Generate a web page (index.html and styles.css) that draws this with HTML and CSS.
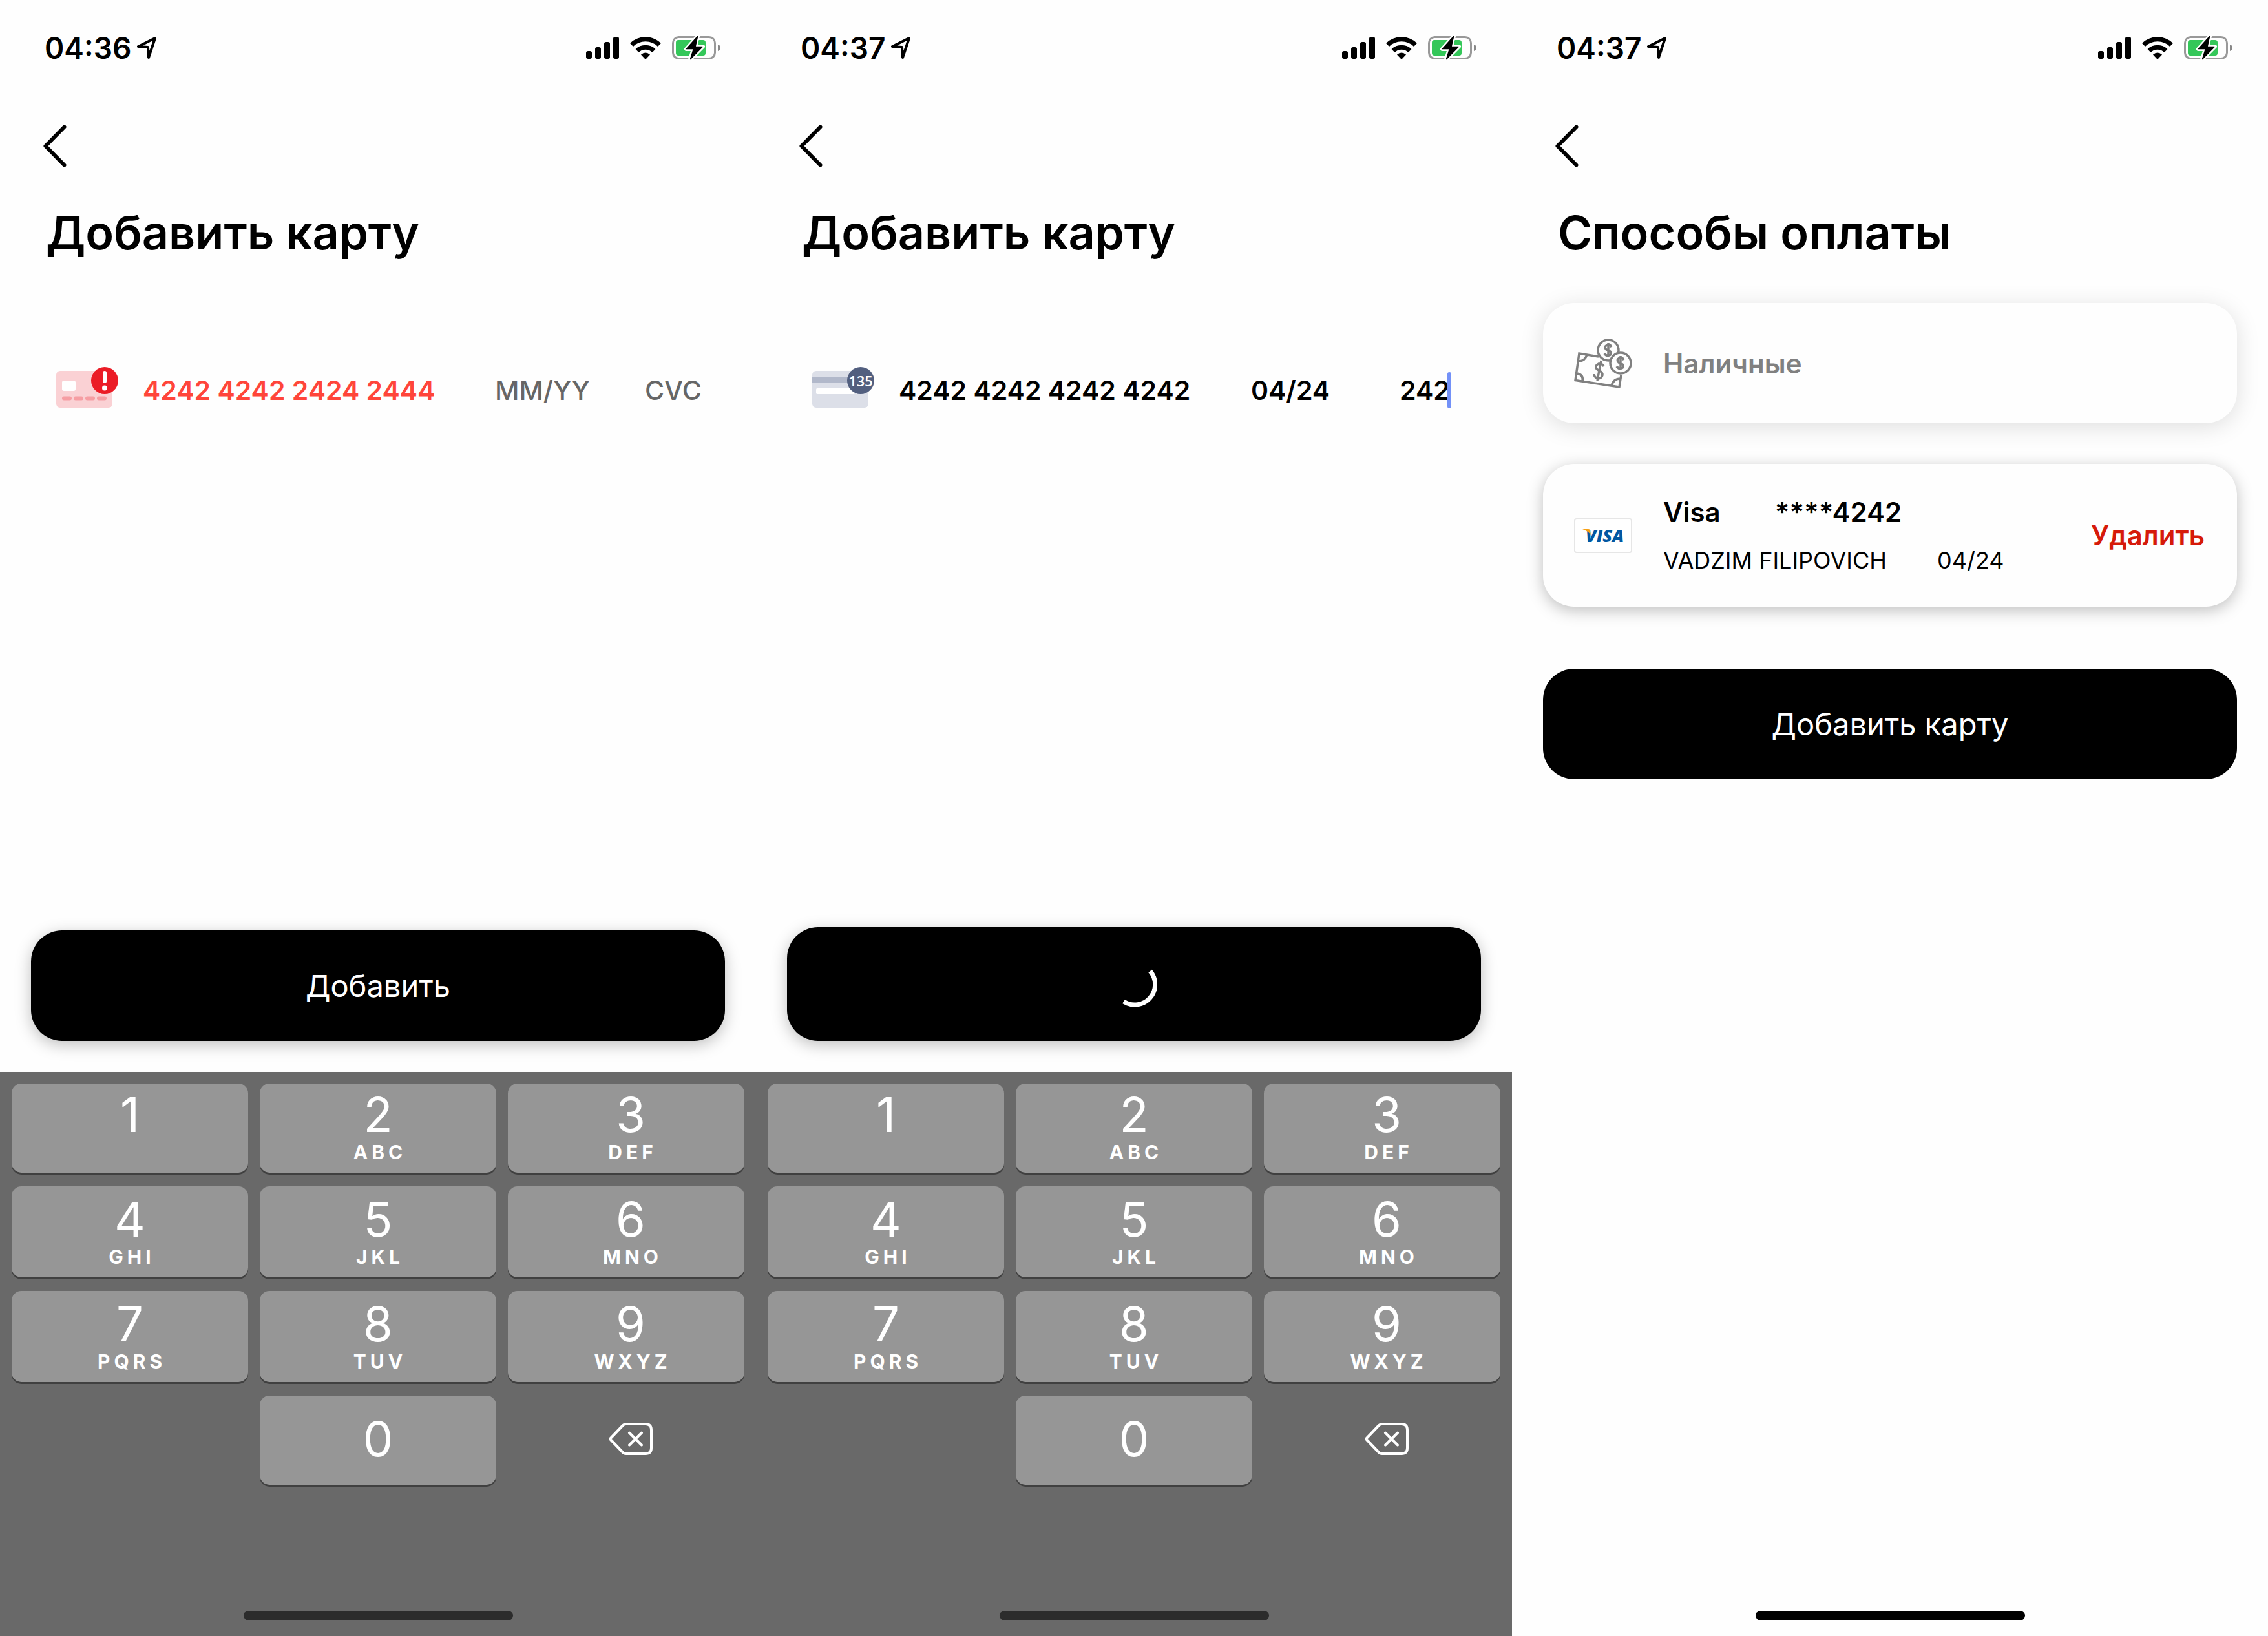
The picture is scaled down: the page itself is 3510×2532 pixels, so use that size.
FILE: index.html
```html
<!DOCTYPE html>
<html lang="ru">
<head>
<meta charset="utf-8">
<title>Способы оплаты</title>
<link rel="stylesheet" href="styles.css">
</head>
<body>
<svg class="defs" aria-hidden="true">
  <symbol id="location" viewBox="0 0 30 34"><path d="M28 2 2 15l15 1 1 16z" fill="none" stroke="#000" stroke-width="4" stroke-linejoin="round"/></symbol>
  <symbol id="signal" viewBox="0 0 51 36"><rect y="23" width="9" height="12" rx="3"/><rect x="14" y="17" width="9" height="18" rx="3"/><rect x="28" y="9" width="9" height="26" rx="3"/><rect x="42" y="1" width="9" height="34" rx="3"/></symbol>
  <symbol id="wifi" viewBox="0 0 48 36"><g fill="none" stroke="#000" stroke-width="7"><path d="M2.500 13.500a31 31 0 0 1 43 0"/><path d="M11 22.500a18.500 18.500 0 0 1 26 0"/></g><path d="M24 36l-7-7.500q7-6 14 0z"/></symbol>
  <symbol id="battery" viewBox="0 0 76 38"><rect x="1.500" y="2.500" width="65" height="33" rx="9" fill="none" stroke="#999" stroke-width="3"/><path d="M71 14q4 1 4 5t-4 5z" fill="#888"/><rect x="6" y="7" width="46" height="24" rx="4" fill="#34c759"/><path d="M40 1 22 21h11l-5 16 20-20H36z" fill="#000" stroke="#fff" stroke-width="6" stroke-linejoin="round" paint-order="stroke"/><path d="M39.500 1.500 22.500 20.500h11l-5 16 18.500-19H36z" stroke="#000" stroke-width="1.500" stroke-linejoin="round"/></symbol>
  <symbol id="chevron" viewBox="0 0 36 66"><path d="M32.500 3.500 3.500 33l29 29.500" fill="none" stroke="#000" stroke-width="6" stroke-linecap="round" stroke-linejoin="round"/></symbol>
  <symbol id="erase" viewBox="0 0 68 50"><path d="M2 25 22 4q2-2 5-2h30q9 0 9 9v28q0 9-9 9H27q-3 0-5-2zM32 15.500l19 19M51 15.500l-19 19" fill="none" stroke="#fff" stroke-width="4" stroke-linecap="round" stroke-linejoin="round"/></symbol>
</svg>
<main class="screens">

  <section class="screen">
    <header class="status"><span class="time">04:36</span><svg class="location"><use href="#location"/></svg><svg class="signal"><use href="#signal"/></svg><svg class="wifi"><use href="#wifi"/></svg><svg class="battery"><use href="#battery"/></svg></header>
    <button class="back" type="button" aria-label="Назад"><svg><use href="#chevron"/></svg></button>
    <h1 class="title">Добавить карту</h1>
    <form class="entry">
      <div class="fields">
        <svg class="brand" viewBox="0 0 96 63"><rect y="6" width="87" height="57" rx="6" fill="#fad1d4"/><rect x="9" y="21" width="21" height="16" rx="3" fill="#fff"/><path d="M12 48.500h9M30 48.500h9M48 48.500h9M66 48.500h9" stroke="#f69ea3" stroke-width="6" stroke-linecap="round"/><circle cx="75" cy="21" r="21" fill="#eb1c26"/><path d="M75 9v13" stroke="#fff" stroke-width="6" stroke-linecap="round"/><circle cx="75" cy="32.500" r="4" fill="#fff"/></svg>
        <input class="number invalid" aria-label="Номер карты" value="4242 4242 2424 2444">
        <input class="expiry" aria-label="Срок действия" placeholder="MM/YY">
        <input class="cvc" aria-label="CVC" placeholder="CVC">
      </div>
      <button class="primary" type="button">Добавить</button>
    </form>
    <div class="keyboard">
      <div class="keys">
        <button type="button">1</button><button type="button">2<small>ABC</small></button><button type="button">3<small>DEF</small></button>
        <button type="button">4<small>GHI</small></button><button type="button">5<small>JKL</small></button><button type="button">6<small>MNO</small></button>
        <button type="button">7<small>PQRS</small></button><button type="button">8<small>TUV</small></button><button type="button">9<small>WXYZ</small></button>
        <button type="button" class="zero">0</button><button type="button" class="erase" aria-label="Стереть"><svg><use href="#erase"/></svg></button>
      </div>
      <div class="home"></div>
    </div>
  </section>

  <section class="screen">
    <header class="status"><span class="time">04:37</span><svg class="location"><use href="#location"/></svg><svg class="signal"><use href="#signal"/></svg><svg class="wifi"><use href="#wifi"/></svg><svg class="battery"><use href="#battery"/></svg></header>
    <button class="back" type="button" aria-label="Назад"><svg><use href="#chevron"/></svg></button>
    <h1 class="title">Добавить карту</h1>
    <form class="entry">
      <div class="fields">
        <svg class="brand" viewBox="0 0 96 63"><rect y="6" width="87" height="57" rx="6" fill="#dcdfe8"/><path d="M0 15h87v9H0z" fill="#b1b8ca"/><rect x="6" y="33" width="60" height="9" rx="2" fill="#fff"/><circle cx="75" cy="21" r="21" fill="#525f7f"/><text class="digits" x="75" y="30" text-anchor="middle">135</text></svg>
        <input class="number" aria-label="Номер карты" value="4242 4242 4242 4242">
        <input class="expiry" aria-label="Срок действия" value="04/24">
        <span class="cvc-active"><input class="cvc" aria-label="CVC" value="242"><i class="caret"></i></span>
      </div>
      <button class="primary busy" type="button" aria-label="Загрузка"><svg class="spinner" viewBox="0 0 70 70"><path d="M60 15A31.500 31.500 0 0 1 19 62" fill="none" stroke="#fff" stroke-width="7"/></svg></button>
    </form>
    <div class="keyboard">
      <div class="keys">
        <button type="button">1</button><button type="button">2<small>ABC</small></button><button type="button">3<small>DEF</small></button>
        <button type="button">4<small>GHI</small></button><button type="button">5<small>JKL</small></button><button type="button">6<small>MNO</small></button>
        <button type="button">7<small>PQRS</small></button><button type="button">8<small>TUV</small></button><button type="button">9<small>WXYZ</small></button>
        <button type="button" class="zero">0</button><button type="button" class="erase" aria-label="Стереть"><svg><use href="#erase"/></svg></button>
      </div>
      <div class="home"></div>
    </div>
  </section>

  <section class="screen">
    <header class="status"><span class="time">04:37</span><svg class="location"><use href="#location"/></svg><svg class="signal"><use href="#signal"/></svg><svg class="wifi"><use href="#wifi"/></svg><svg class="battery"><use href="#battery"/></svg></header>
    <button class="back" type="button" aria-label="Назад"><svg><use href="#chevron"/></svg></button>
    <h1 class="title">Способы оплаты</h1>
    <div class="methods">
      <button class="method cash" type="button">
        <svg class="cash-icon" viewBox="0 0 90 77" fill="none" stroke="#808080" stroke-width="3.500"><path d="M38 28 8 23 2 64.500 70 75l3-19M20 25q-3 10-13 10M5 54q10 2 8 12M58 73q3-11 14-11"/><circle cx="53" cy="18" r="16"/><circle cx="72" cy="38" r="16" fill="#fefefe"/><path d="M46 43q-3-5-8-4-6 3-3 8 2 2 5 3 6 4 3 9-3 4-8 2-4-2-4-6M42 34 36 65"/><path d="M58 13q-3-5-7-3-5 3-1 7l6 3q3 4-1 6-5 2-8-3M53 7v22M77 33q-3-5-7-3-5 3-1 7l6 3q3 4-1 6-5 2-8-3M72 27v22"/></svg>
        <span>Наличные</span>
      </button>
      <article class="method card">
        <svg class="visa" viewBox="0 0 90 54"><rect x="1" y="1" width="88" height="52" rx="3" fill="#fff" stroke="#e6e6e6" stroke-width="2"/><text class="visa-word" x="18" y="37">VISA</text><path d="M13 17h9q3 0 3 3l1 6q-4-6-13-9z" fill="#f7a014"/></svg>
        <div class="details">
          <div class="line main"><span>Visa</span><span>****4242</span></div>
          <div class="line sub"><span>VADZIM FILIPOVICH</span><span>04/24</span></div>
        </div>
        <button class="remove" type="button">Удалить</button>
      </article>
      <button class="primary flat" type="button">Добавить карту</button>
    </div>
    <div class="home"></div>
  </section>
</main>
</body>
</html>
```
FILE: styles.css
```css
* { box-sizing: border-box; }
body { margin: 0; background: #fff; color: #000; font-family: Inter, "Liberation Sans", sans-serif; }
button, input { margin: 0; padding: 0; border: 0; background: none; color: inherit; font: inherit; }
svg { display: block; flex: none; }
.defs { display: none; }
.screens { display: grid; grid-template-columns: repeat(3, 1fr); min-height: 100vh; }
.screen { display: flex; flex-direction: column; min-width: 0; background: #fefefe; }

.status { display: flex; align-items: center; height: 148px; padding: 0 54px 0 69px; }
.time { font-size: 46px; font-weight: 600; line-height: 56px; }
.location { width: 30px; height: 34px; margin-left: 9px; }
.signal { width: 51px; height: 36px; margin-left: auto; }
.wifi { width: 48px; height: 36px; margin-left: 17px; }
.battery { width: 76px; height: 38px; margin-left: 17px; }

.back { align-self: flex-start; margin: 45px 0 0 67px; }
.back svg { width: 36px; height: 66px; }
.title { margin: 53px 0 0 71px; font-size: 72px; font-weight: 600; line-height: 96px; }

.entry { display: flex; flex: 1; flex-direction: column; justify-content: space-between; padding: 160px 48px 48px; }
.fields { display: flex; align-items: center; height: 72px; padding-left: 39px; font-size: 41px; font-weight: 600; }
.brand { width: 96px; height: 63px; margin-bottom: 9px; }
.digits { fill: #fff; font: 600 22px "Open Sans", sans-serif; }
.fields input { height: 54px; line-height: 54px; }
.fields input::placeholder { color: #666; font-weight: 500; opacity: 1; }
.number { width: 508px; margin-left: 38px; }
.invalid { color: #ff453a; }
.expiry { width: 160px; margin-left: 37px; }
.cvc { width: 90px; margin-left: 72px; }
.cvc-active { display: flex; align-items: center; margin-left: 70px; }
.cvc-active .cvc { width: 74px; margin: 0; }
.caret { width: 6px; height: 56px; border-radius: 3px; background: #7391f8; }

.primary { display: flex; align-items: center; justify-content: center; height: 171px; border-radius: 48px; background: #000; color: #fff; font-size: 47px; box-shadow: 0 6px 24px rgb(0 0 0 / 25%); }
.busy { height: 176px; }
.flat { margin-top: 33px; box-shadow: none; }
.spinner { width: 70px; height: 70px; }

.keyboard { display: flex; flex-direction: column; justify-content: space-between; height: 873px; padding: 18px 18px 24px; background: #696969; }
.keys { display: grid; grid-template-columns: repeat(3, 1fr); grid-template-rows: 138px 141px 141px 138px; gap: 21px 18px; color: #fff; font-size: 74px; }
.keys button { display: flex; flex-direction: column; align-items: center; padding-top: 10px; border-radius: 15px; background: #969696; box-shadow: 0 3px 0 #404040; line-height: 76px; }
.keys button:nth-child(n + 4) { padding-top: 13px; }
.keys button:nth-child(3n) { padding-left: 14px; }
.keys small { padding-left: 6px; font-size: 30px; font-weight: 700; letter-spacing: 6px; line-height: 40px; }
.keys button.zero { grid-column: 2; justify-content: center; padding: 0 0 4px; }
.keys button.erase { justify-content: center; padding: 0 0 4px 14px; background: none; box-shadow: none; }
.erase svg { width: 68px; height: 50px; }
.home { align-self: center; width: 417px; height: 15px; border-radius: 8px; background: #2c2c2c; }

.methods { display: flex; flex-direction: column; gap: 63px; padding: 61px 48px 0; }
.method { display: flex; align-items: center; border-radius: 48px; background: #fefefe; padding: 0 50px 0 48px; font-size: 42px; font-weight: 600; }
.cash { height: 186px; gap: 48px; color: #808080; box-shadow: 0 6px 36px rgb(0 0 0 / 13%); }
.cash-icon { width: 90px; height: 77px; }
.card { height: 221px; gap: 48px; box-shadow: 0 6px 24px rgb(0 0 0 / 25%); }
.visa { width: 90px; height: 54px; }
.visa-word { fill: #0157a2; font: italic 800 27px "Open Sans", sans-serif; }
.details { display: flex; flex: 1; flex-direction: column; gap: 20px; padding-top: 2px; }
.line { display: flex; }
.main { gap: 84px; line-height: 54px; }
.sub { gap: 78px; font-size: 36px; font-weight: 400; line-height: 54px; }
.remove { color: #d61a0a; }
.screen > .home { margin: auto 0 24px; background: #000; }
```
